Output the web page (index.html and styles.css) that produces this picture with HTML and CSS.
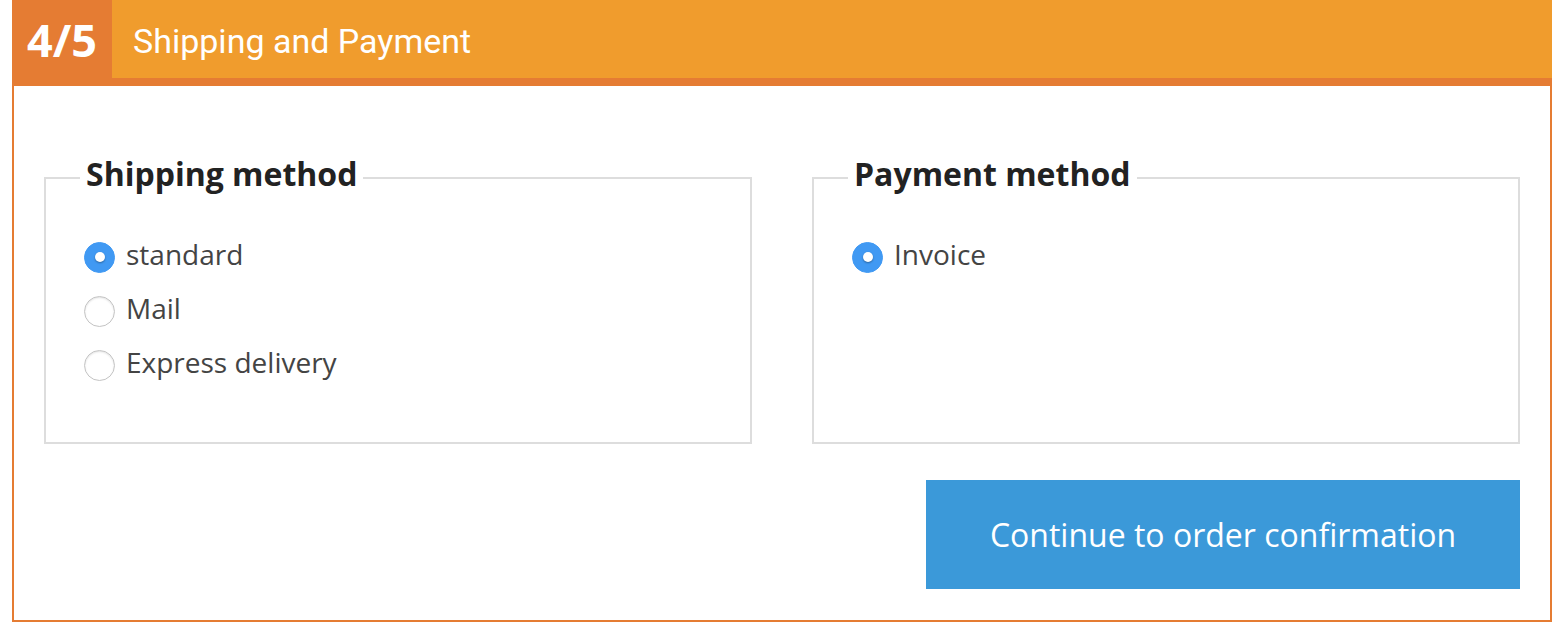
FILE: index.html
```html
<!DOCTYPE html>
<html lang="en">
<head>
<meta charset="utf-8">
<title>Shipping and Payment</title>
<link rel="stylesheet" href="styles.css">
</head>
<body>
<section class="step">
  <header class="step-header">
    <div class="step-num">4/5</div>
    <h2 class="step-title">Shipping and Payment</h2>
  </header>
  <div class="step-body">
    <div class="methods">
      <fieldset class="method">
        <legend class="method-legend">Shipping method</legend>
        <label class="option"><input class="radio" type="radio" name="ship" checked><span class="option-text">standard</span></label>
        <label class="option"><input class="radio" type="radio" name="ship"><span class="option-text">Mail</span></label>
        <label class="option"><input class="radio" type="radio" name="ship"><span class="option-text">Express delivery</span></label>
      </fieldset>
      <fieldset class="method">
        <legend class="method-legend">Payment method</legend>
        <label class="option"><input class="radio" type="radio" name="pay" checked><span class="option-text">Invoice</span></label>
      </fieldset>
    </div>
    <div class="actions">
      <button class="btn-continue" type="button">Continue to order confirmation</button>
    </div>
  </div>
</section>
</body>
</html>
```
FILE: styles.css
```css
* { box-sizing: border-box; }
html, body { margin: 0; padding: 0; background: #fff; }
body { font-family: "Open Sans", "Noto Sans", sans-serif; }

.step { margin: 0 12px; width: 1540px; }

.step-header {
  display: flex;
  height: 86px;
  background: #F09C2D;
  border-bottom: 8px solid #E57C33;
}
.step-num {
  width: 100px;
  height: 78px;
  background: #E57C33;
  color: #fff;
  font-family: "Open Sans", sans-serif;
  font-weight: 700;
  font-size: 45px;
  line-height: 80px;
  text-align: center;
}
.step-title {
  margin: 0;
  padding-left: 21px;
  color: #fff;
  font-family: Roboto, "Liberation Sans", sans-serif;
  font-weight: 400;
  font-size: 34px;
  line-height: 83px;
}

.step-body {
  border: 2px solid #E57C33;
  border-top: 0;
  padding: 69px 30px 31px 30px;
}

.methods {
  display: grid;
  grid-template-columns: 708px 708px;
  column-gap: 60px;
}
.method {
  margin: 0;
  border: 2px solid #ddd;
  padding: 30px 0 50px 34px;
  min-width: 0;
}
.method-legend {
  padding: 0 6px 7px;
  font-weight: 700;
  font-size: 32px;
  line-height: 38px;
  color: #222;
}
.option {
  display: flex;
  align-items: center;
  height: 54px;
  padding-left: 4px;
  font-size: 28px;
  color: #444;
  cursor: pointer;
}
.option-text { margin-bottom: 7px; }
.radio {
  appearance: none;
  -webkit-appearance: none;
  margin: 0 11px 0 0;
  width: 31px;
  height: 31px;
  border-radius: 50%;
  border: 1px solid #c4c4c4;
  background: #fff;
  box-shadow: inset 0 1px 2px rgba(0,0,0,0.12);
  position: relative;
  flex: none;
}
.radio:checked {
  border-color: #4099F3;
  background: #4099F3;
  box-shadow: none;
}
.radio:checked::after {
  content: "";
  position: absolute;
  left: 50%;
  top: 50%;
  width: 10px;
  height: 10px;
  margin: -5px 0 0 -5px;
  border-radius: 50%;
  background: #fff;
  box-shadow: 0 1px 2px rgba(0,0,0,0.35);
}

.actions {
  display: flex;
  justify-content: flex-end;
  margin-top: 36px;
}
.btn-continue {
  width: 594px;
  height: 109px;
  border: 0;
  background: #3B99D9;
  color: #fff;
  font-family: "Open Sans", sans-serif;
  font-size: 32px;
  cursor: pointer;
}
```
